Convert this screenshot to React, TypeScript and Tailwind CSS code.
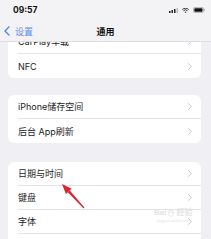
import React from "react";

const cjk = { fontFamily: 'Inter, "Noto Sans CJK SC", sans-serif' };

function Chevron() {
  return (
    <svg width="4" height="7" viewBox="0 0 4 7" className="shrink-0">
      <path d="M0.6 0.6 L3.2 3.5 L0.6 6.4" fill="none" stroke="#c5c5c9" strokeWidth="1" strokeLinecap="round" />
    </svg>
  );
}

function Row({ label, last, chevron = true }: { label: string; last?: boolean; chevron?: boolean }) {
  return (
    <div className="h-6 pl-[10px] flex items-center">
      <div className={`flex-1 h-full flex items-center pr-[9px] ${last ? "" : "border-b border-[#e3e3e8]"}`}>
        <span className="flex-1 text-[9px] text-[#1c1c1e] leading-none">{label}</span>
        {chevron && <Chevron />}
      </div>
    </div>
  );
}

function Card({ children, className = "" }: { children: React.ReactNode; className?: string }) {
  return <div className={`mx-2 w-[193px] bg-white rounded-[6px] overflow-hidden ${className}`}>{children}</div>;
}

export default function App() {
  return (
    <div className="relative w-[211px] h-[239px] overflow-hidden bg-[#efeff4]" style={cjk}>
      {/* header over the scrolled list */}
      <div className="absolute top-0 left-0 right-0 h-[42px] z-10 bg-[#f3f3f6] border-b border-[#dedee3]">
        <div className="h-5 flex items-center justify-between pl-[13px] pr-[6px]">
          <span className="text-[8.5px] font-bold text-[#111] pt-[1px]">09:57</span>
          <div className="flex items-center gap-[4px]">
            <svg width="9" height="5" viewBox="0 0 9 5">
              <rect x="0" y="3" width="1.5" height="2" fill="#222" />
              <rect x="2.5" y="2" width="1.5" height="3" fill="#222" />
              <rect x="5" y="1" width="1.5" height="4" fill="#222" />
              <rect x="7.5" y="0" width="1.5" height="5" fill="#bbb" />
            </svg>
            <svg width="7" height="5" viewBox="0 0 7 5">
              <path d="M0.3 1.6 A4.4 4.4 0 0 1 6.7 1.6" fill="none" stroke="#222" strokeWidth="0.9" />
              <path d="M1.5 2.8 A2.7 2.7 0 0 1 5.5 2.8" fill="none" stroke="#222" strokeWidth="0.9" />
              <path d="M3.5 5 L2.6 3.9 A1.3 1.3 0 0 1 4.4 3.9 Z" fill="#222" />
            </svg>
            <svg width="12" height="6" viewBox="0 0 12 6">
              <rect x="0.4" y="0.4" width="10" height="5.2" rx="1.4" fill="none" stroke="#999" strokeWidth="0.7" />
              <rect x="1.3" y="1.3" width="8.2" height="3.4" rx="0.7" fill="#111" />
              <rect x="10.8" y="2" width="0.9" height="2" rx="0.4" fill="#999" />
            </svg>
          </div>
        </div>
        <div className="relative h-[22px] flex items-center pl-[4px]">
          <svg width="6" height="10" viewBox="0 0 6 10">
            <path d="M5 0.8 L1 5 L5 9.2" fill="none" stroke="#3a7cf2" strokeWidth="1.2" strokeLinecap="round" strokeLinejoin="round" />
          </svg>
          <span className="ml-[5px] text-[9px] text-[#5a8ef0] leading-none">设置</span>
          <span className="absolute left-0 right-0 text-center text-[9px] font-semibold text-[#111] leading-none pointer-events-none">
            通用
          </span>
        </div>
      </div>

      {/* list */}
      <div className="pt-[30px] flex flex-col">
        <Card>
          <Row label="CarPlay车载" />
          <Row label="NFC" last />
        </Card>
        <Card className="mt-[17px]">
          <Row label="iPhone储存空间" />
          <Row label="后台 App刷新" last />
        </Card>
        <Card className="mt-[19px]">
          <Row label="日期与时间" />
          <Row label="键盘" />
          <Row label="字体" />
          <Row label="" chevron={false} last />
        </Card>
      </div>

      {/* watermark */}
      <div className="absolute left-[154px] top-[209px] flex flex-col items-center leading-none text-[#e4e4e6] pointer-events-none">
        <div className="flex items-center gap-[1px] text-[8px] font-bold" style={{ fontFamily: '"Liberation Sans", "Noto Sans CJK SC", sans-serif' }}>
          <span>Bai</span>
          <svg width="8" height="8" viewBox="0 0 8 8">
            <circle cx="4" cy="5.2" r="2.2" fill="none" stroke="#e2e2e4" strokeWidth="0.8" />
            <circle cx="1.3" cy="2.8" r="0.9" fill="#e2e2e4" />
            <circle cx="3" cy="1.2" r="0.9" fill="#e2e2e4" />
            <circle cx="5" cy="1.2" r="0.9" fill="#e2e2e4" />
            <circle cx="6.7" cy="2.8" r="0.9" fill="#e2e2e4" />
          </svg>
          <span>经验</span>
        </div>
        <span className="text-[4px] mt-[2px]" style={{ fontFamily: '"Liberation Sans", sans-serif' }}>jingyan.baidu.com</span>
      </div>

      {/* red arrow */}
      <svg className="absolute left-0 top-0 pointer-events-none" width="211" height="239" viewBox="0 0 211 239">
        <polygon points="62,184 65.9,194.1 71.7,188.7" fill="#d9252e" />
        <polygon points="67.8,192.3 69.8,190.5 84.4,207.6 83.6,208.4" fill="#d9252e" />
      </svg>
    </div>
  );
}
